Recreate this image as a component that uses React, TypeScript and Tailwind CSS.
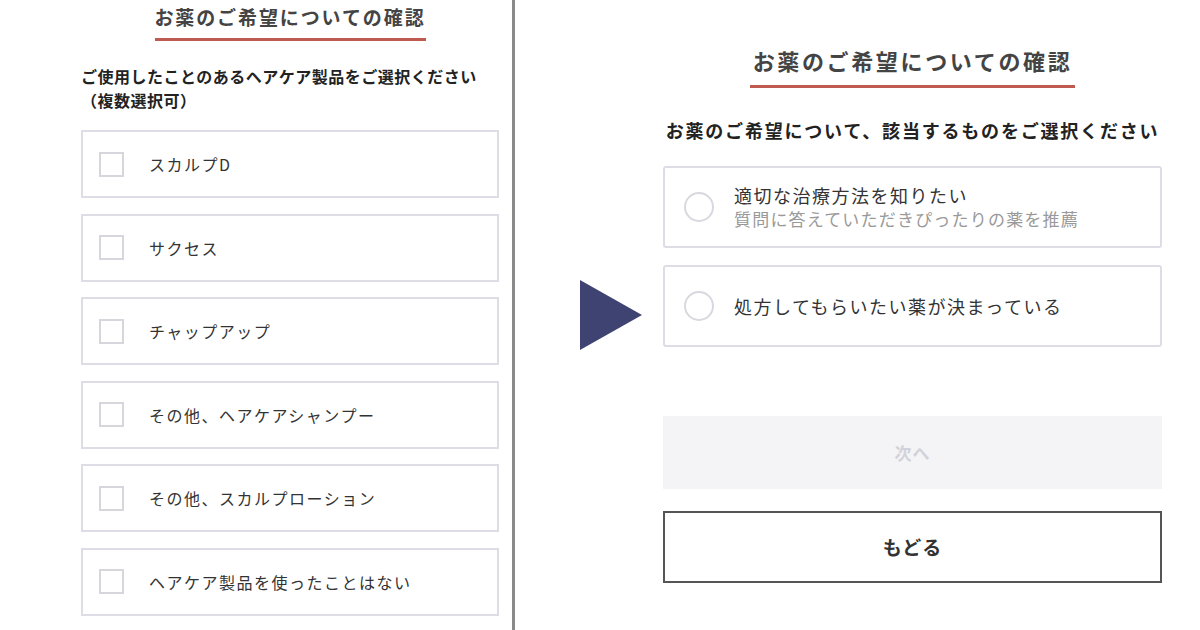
const font = { fontFamily: '"Noto Sans CJK JP", "Noto Sans", sans-serif' };

const hairProducts = [
  'スカルプD',
  'サクセス',
  'チャップアップ',
  'その他、ヘアケアシャンプー',
  'その他、スカルプローション',
  'ヘアケア製品を使ったことはない',
];

function LeftPanel() {
  return (
    <div className="w-[512px] shrink-0 pl-[81px] pr-[13px] pt-[3px]">
      <h2 className="text-center text-[19px] leading-[28px] font-bold tracking-[0.1em] text-[#444]">
        お薬のご希望についての確認
      </h2>
      <div className="mx-auto mt-[7px] h-[3px] w-[271px] bg-[#bf5a50]" />
      <p className="mt-[23px] text-[16px] leading-[24px] font-bold tracking-[0.5px] text-[#222]">
        ご使用したことのあるヘアケア製品をご選択ください
        <br />
        （複数選択可）
      </p>
      <div className="mt-[18px] flex flex-col gap-[15.6px]">
        {hairProducts.map((item) => (
          <div
            key={item}
            className="flex h-[68px] items-center border-2 border-[#dedde6] bg-white pl-[16px]"
          >
            <span className="h-[25px] w-[25px] shrink-0 border-2 border-[#d6d6dd] bg-white" />
            <span className="ml-[25px] text-[16px] tracking-[1.5px] text-[#333]">{item}</span>
          </div>
        ))}
      </div>
    </div>
  );
}

function Radio() {
  return <span className="h-[30px] w-[30px] shrink-0 rounded-full border-2 border-[#d8d8de] bg-white" />;
}

function RightPanel() {
  return (
    <div className="w-[499px] shrink-0 pt-[44px]">
      <h2 className="text-center text-[22px] leading-[32px] font-bold tracking-[0.12em] text-[#444]">
        お薬のご希望についての確認
      </h2>
      <div className="mx-auto mt-[9px] h-[3px] w-[325px] bg-[#bf5a50]" />
      <p className="mt-[29px] text-center text-[18px] leading-[26px] font-bold tracking-[0.1em] text-[#222]">
        お薬のご希望について、該当するものをご選択ください
      </p>

      <div className="mt-[23px] flex h-[82px] items-center rounded-[3px] border-2 border-[#dedde6] pl-[19px]">
        <Radio />
        <div className="ml-[20px]">
          <div className="text-[18px] leading-[24px] tracking-[1.5px] text-[#333]">適切な治療方法を知りたい</div>
          <div className="text-[17px] leading-[24px] tracking-[1.2px] text-[#999]">
            質問に答えていただきぴったりの薬を推薦
          </div>
        </div>
      </div>
      <div className="mt-[17px] flex h-[82px] items-center rounded-[3px] border-2 border-[#dedde6] pl-[19px]">
        <Radio />
        <div className="ml-[20px] text-[18px] leading-[24px] tracking-[1.5px] text-[#333]">
          処方してもらいたい薬が決まっている
        </div>
      </div>

      <button className="mt-[69px] flex h-[73px] w-full items-center justify-center bg-[#f4f4f6] text-[17px] font-bold tracking-[1px] text-[#d2d2da]">
        次へ
      </button>
      <button className="mt-[22px] flex h-[72px] w-full items-center justify-center border-2 border-[#555] bg-white text-[19px] font-bold tracking-[1px] text-[#333]">
        もどる
      </button>
    </div>
  );
}

export default function App() {
  return (
    <div className="flex h-[630px] w-[1200px] overflow-hidden bg-white" style={font}>
      <LeftPanel />
      <div className="w-[3px] shrink-0 bg-[#8a8a8a]" />
      <div className="flex flex-1">
        <svg
          className="ml-[65px] mr-[21px] shrink-0 self-center"
          width="62"
          height="70"
          viewBox="0 0 62 70"
        >
          <polygon points="0,0 62,35 0,70" fill="#3f4372" />
        </svg>
        <RightPanel />
      </div>
    </div>
  );
}
